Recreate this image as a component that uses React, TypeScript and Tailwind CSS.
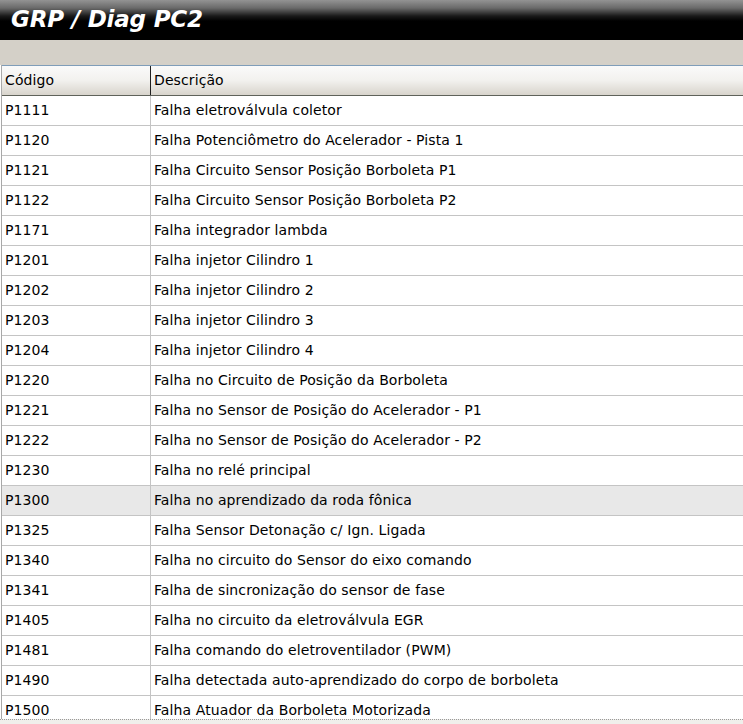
import React from 'react';

const rows: [string, string][] = [
    ['P1111', 'Falha eletroválvula coletor'],
    ['P1120', 'Falha Potenciômetro do Acelerador - Pista 1'],
    ['P1121', 'Falha Circuito Sensor Posição Borboleta P1'],
    ['P1122', 'Falha Circuito Sensor Posição Borboleta P2'],
    ['P1171', 'Falha integrador lambda'],
    ['P1201', 'Falha injetor Cilindro 1'],
    ['P1202', 'Falha injetor Cilindro 2'],
    ['P1203', 'Falha injetor Cilindro 3'],
    ['P1204', 'Falha injetor Cilindro 4'],
    ['P1220', 'Falha no Circuito de Posição da Borboleta'],
    ['P1221', 'Falha no Sensor de Posição do Acelerador - P1'],
    ['P1222', 'Falha no Sensor de Posição do Acelerador - P2'],
    ['P1230', 'Falha no relé principal'],
    ['P1300', 'Falha no aprendizado da roda fônica'],
    ['P1325', 'Falha Sensor Detonação c/ Ign. Ligada'],
    ['P1340', 'Falha no circuito do Sensor do eixo comando'],
    ['P1341', 'Falha de sincronização do sensor de fase'],
    ['P1405', 'Falha no circuito da eletroválvula EGR'],
    ['P1481', 'Falha comando do eletroventilador (PWM)'],
    ['P1490', 'Falha detectada auto-aprendizado do corpo de borboleta'],
    ['P1500', 'Falha Atuador da Borboleta Motorizada'],
];

export default function App() {
    return (
        <div className="w-[743px] h-[724px] flex flex-col bg-white overflow-hidden font-['DejaVu_Sans',sans-serif]">
            {/* Title bar */}
            <div className="h-[40px] shrink-0 bg-[linear-gradient(to_bottom,#939393_0px,#6a6a6a_8px,#1a1a1a_16px,#000_21px,#000_40px)] flex items-center px-[11px]">
                <span className="text-white font-bold italic text-[23px] tracking-[-0.2px] leading-none pb-[2px]">GRP / Diag PC2</span>
            </div>

            {/* Toolbar strip */}
            <div className="h-[25px] shrink-0 bg-[#d4d0c8]" />

            {/* Grid */}
            <div className="flex-1 min-h-0 overflow-hidden flex flex-col border-l border-[#a9a9a9] ml-px text-[14px] tracking-[0.1px] text-black">
                <div className="h-[31px] shrink-0 flex border-t border-[#7f9db9] border-b border-b-[#5f625a] bg-[linear-gradient(to_bottom,#fafafa,#f2f1ee_50%,#d8d4cc)]">
                    <div className="w-[149px] shrink-0 pl-[3px] pb-px flex items-center border-r border-[#202020]">Código</div>
                    <div className="flex-1 pl-[3px] pb-px flex items-center">Descrição</div>
                </div>
                {rows.map(([code, desc]) => (
                    <div
                        key={code}
                        className={`h-[30px] shrink-0 flex border-b border-[#c4c4c4] ${code === 'P1300' ? 'bg-[#e8e8e8]' : 'bg-white'}`}
                    >
                        <div className="w-[149px] shrink-0 pl-[3px] pb-px flex items-center border-r border-[#c4c4c4]">{code}</div>
                        <div className="flex-1 pl-[3px] pb-px flex items-center whitespace-nowrap">{desc}</div>
                    </div>
                ))}
            </div>

            {/* Scrollbar edge */}
            <div className="h-[5px] shrink-0 border-t border-dotted border-[#9a9a9a] bg-[#f0efeb]" />
        </div>
    );
}
